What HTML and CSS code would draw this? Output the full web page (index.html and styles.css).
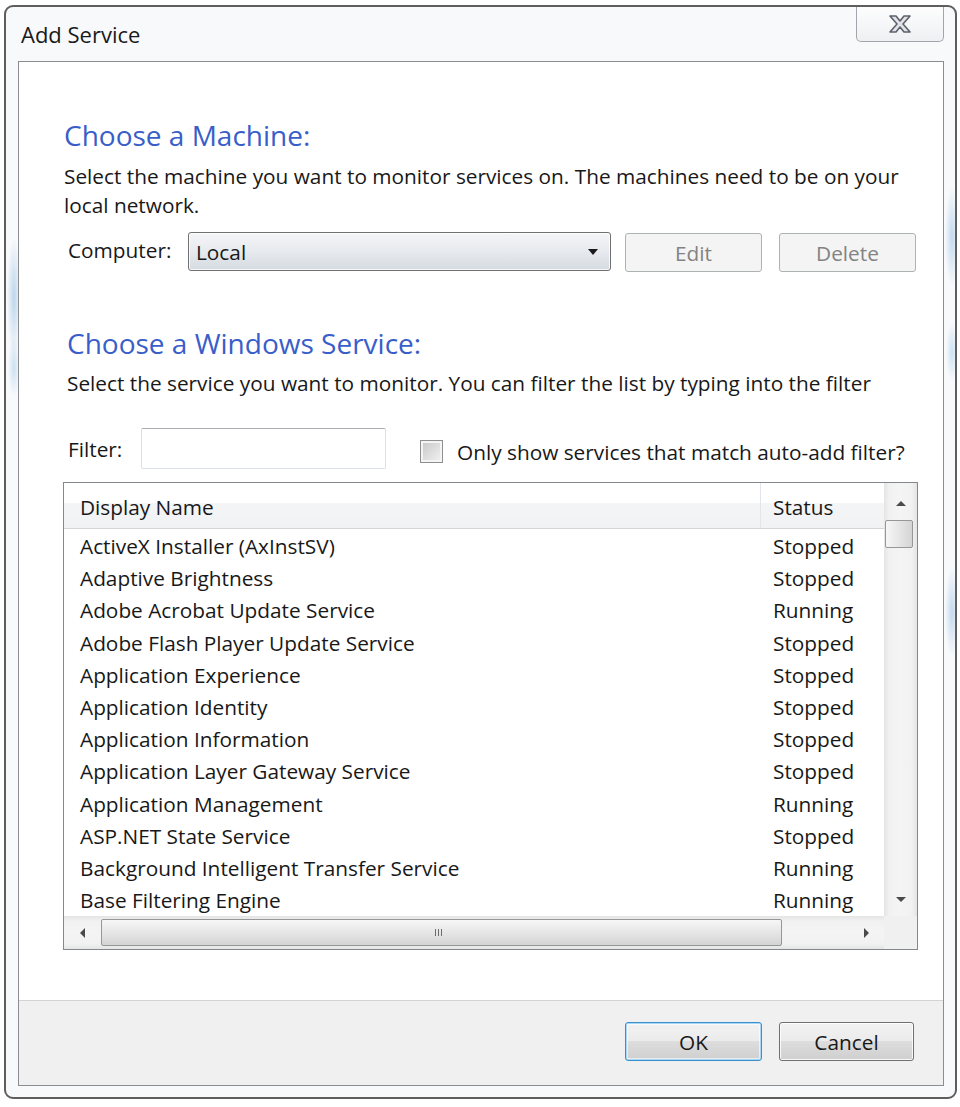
FILE: index.html
```html
<!DOCTYPE html>
<html lang="en">

<head>
  <meta charset="UTF-8">
  <meta name="viewport" content="width=device-width, initial-scale=1.0">
  <title>Add Service</title>
  <link rel="stylesheet" href="styles.css">
</head>

<body>
  <div class="window">
    <div class="titlebar">
      <span class="title">Add Service</span>
      <button class="close-btn" aria-label="Close">
        <svg width="22" height="18" viewBox="-1 -1 22 18">
          <path d="M0 0 L6 0 L10 5 L14 0 L20 0 L13 8 L20 16 L14 16 L10 11 L6 16 L0 16 L7 8 Z" fill="#e2e3e8" stroke="#5d616c" stroke-width="1.6" stroke-linejoin="round"/>
        </svg>
      </button>
    </div>

    <div class="client">
      <div class="content">
        <h2 class="section-title">Choose a Machine:</h2>
        <p class="hint">Select the machine you want to monitor services on. The machines need to be on your<br>local network.</p>

        <div class="machine-row">
          <label class="field-label">Computer:</label>
          <div class="combo">
            <span>Local</span>
            <span class="combo-arrow"></span>
          </div>
          <button class="button edit-btn" disabled>Edit</button>
          <button class="button" disabled>Delete</button>
        </div>

        <h2 class="section-title second">Choose a Windows Service:</h2>
        <p class="hint second">Select the service you want to monitor. You can filter the list by typing into the filter</p>

        <div class="filter-row">
          <label class="filter-label">Filter:</label>
          <input type="text" class="input">
          <label class="check">
            <span class="checkbox"></span>
            Only show services that match auto-add filter?
          </label>
        </div>

        <div class="listview">
          <div class="list-main">
            <div class="list-header">
              <div class="col-name">Display Name</div>
              <div class="col-status">Status</div>
            </div>
            <div class="list-body">
              <div class="row"><div class="col-name">ActiveX Installer (AxInstSV)</div><div class="col-status">Stopped</div></div>
              <div class="row"><div class="col-name">Adaptive Brightness</div><div class="col-status">Stopped</div></div>
              <div class="row"><div class="col-name">Adobe Acrobat Update Service</div><div class="col-status">Running</div></div>
              <div class="row"><div class="col-name">Adobe Flash Player Update Service</div><div class="col-status">Stopped</div></div>
              <div class="row"><div class="col-name">Application Experience</div><div class="col-status">Stopped</div></div>
              <div class="row"><div class="col-name">Application Identity</div><div class="col-status">Stopped</div></div>
              <div class="row"><div class="col-name">Application Information</div><div class="col-status">Stopped</div></div>
              <div class="row"><div class="col-name">Application Layer Gateway Service</div><div class="col-status">Stopped</div></div>
              <div class="row"><div class="col-name">Application Management</div><div class="col-status">Running</div></div>
              <div class="row"><div class="col-name">ASP.NET State Service</div><div class="col-status">Stopped</div></div>
              <div class="row"><div class="col-name">Background Intelligent Transfer Service</div><div class="col-status">Running</div></div>
              <div class="row"><div class="col-name">Base Filtering Engine</div><div class="col-status">Running</div></div>
            </div>
          </div>

          <div class="vscroll">
            <div class="sb-btn up-btn"><span class="arrow-up"></span></div>
            <div class="vthumb"></div>
            <div class="sb-track"></div>
            <div class="sb-btn"><span class="arrow-down"></span></div>
          </div>

          <div class="hscroll">
            <div class="sb-btn"><span class="arrow-left"></span></div>
            <div class="hthumb"><span class="grip"></span></div>
            <div class="sb-track"></div>
            <div class="sb-btn"><span class="arrow-right"></span></div>
          </div>

          <div class="corner"></div>
        </div>
      </div>

      <div class="footer">
        <button class="button push default">OK</button>
        <button class="button push">Cancel</button>
      </div>
    </div>
  </div>
</body>

</html>
```

FILE: styles.css
```css
body {
  margin: 0;
  padding: 5px 0 0 4px;
  background: #fff;
  font-family: "Open Sans", "Noto Sans", sans-serif;
  color: #181818;
}

/* window frame */
.window {
  width: 953px;
  height: 1094px;
  box-sizing: border-box;
  border: 2px solid #5e5e5e;
  border-radius: 9px;
  padding: 0 11px 11px 12px;
  display: flex;
  flex-direction: column;
  background:
    radial-gradient(7px 60px at 8px 290px, rgba(140, 185, 225, 0.55), transparent),
    radial-gradient(6px 30px at 8px 360px, rgba(150, 195, 230, 0.45), transparent),
    radial-gradient(7px 50px at 946px 230px, rgba(140, 185, 225, 0.5), transparent),
    radial-gradient(6px 30px at 946px 345px, rgba(150, 195, 230, 0.45), transparent),
    radial-gradient(7px 45px at 946px 605px, rgba(140, 185, 225, 0.5), transparent),
    #f8f9fb;
}

.titlebar {
  height: 54px;
  display: flex;
  justify-content: space-between;
  align-items: flex-start;
  flex-shrink: 0;
}

.title {
  margin: 13px 0 0 3px;
  font-size: 22px;
  line-height: 28px;
  color: #1a1a1a;
}

.close-btn {
  width: 88px;
  height: 35px;
  padding: 0;
  border: 1px solid #a2a6ac;
  border-top: none;
  border-radius: 0 0 5px 5px;
  background: linear-gradient(#fdfdfd, #eef0f3);
  display: flex;
  align-items: center;
  justify-content: center;
}

/* client area */
.client {
  flex: 1;
  display: flex;
  flex-direction: column;
  border: 1px solid #8b8d90;
  background: #fff;
}

.content {
  flex: 1;
  padding: 0 25px 0 44px;
}

.section-title {
  margin: 56px 0 0 1px;
  font-size: 28px;
  line-height: 34px;
  font-weight: normal;
  color: #3a5ec9;
}

.section-title.second {
  margin: 55px 0 0 4px;
}

.hint {
  margin: 10px 0 0 1px;
  font-size: 20.8px;
  line-height: 28.5px;
}

.hint.second {
  margin: 11px 0 0 4px;
  line-height: 25px;
}

.machine-row {
  margin-top: 13px;
  height: 39px;
  display: flex;
  align-items: center;
}

.field-label {
  width: 120px;
  padding-left: 5px;
  margin-top: -3px;
  font-size: 20.8px;
}

.combo {
  width: 423px;
  height: 39px;
  box-sizing: border-box;
  margin-right: 14px;
  padding: 0 12px 0 7px;
  border: 1px solid #707070;
  border-radius: 3px;
  box-shadow: inset 0 0 0 1px rgba(255, 255, 255, 0.8);
  background: linear-gradient(#f4f5f7, #e7eaee 50%, #d5dbe1);
  display: flex;
  align-items: center;
  justify-content: space-between;
  font-size: 20.8px;
}

.combo-arrow {
  width: 0;
  height: 0;
  border-left: 5px solid transparent;
  border-right: 5px solid transparent;
  border-top: 6px solid #1a1a1a;
}

.button {
  width: 137px;
  height: 39px;
  box-sizing: border-box;
  border: 1px solid #adb2b5;
  border-radius: 3px;
  background: #f4f4f4;
  color: #838383;
  font-family: inherit;
  font-size: 20.8px;
  padding: 0;
}

.machine-row .button {
  margin-top: 2px;
}

.edit-btn {
  margin-right: 17px;
}

.button.push {
  color: #181818;
  border-color: #707070;
  box-shadow: inset 0 0 0 1px rgba(255, 255, 255, 0.85);
  background: linear-gradient(#f2f2f2, #ebebeb 50%, #dddddd 50%, #cfcfcf);
}

.button.default {
  border-color: #3c8fcf;
  box-shadow: inset 0 0 0 1px #a6d8f5, inset 0 0 0 2px rgba(255, 255, 255, 0.6);
}

.footer .button:last-child {
  width: 135px;
}

/* filter */
.filter-row {
  margin-top: 32px;
  height: 41px;
  display: flex;
  align-items: center;
  font-size: 20.8px;
}

.filter-label {
  width: 73px;
  padding-left: 5px;
}

.input {
  width: 245px;
  height: 41px;
  box-sizing: border-box;
  border: 1px solid #dbdfe6;
  border-top-color: #abadb3;
  border-radius: 2px;
  margin-right: 34px;
}

.check {
  display: flex;
  align-items: center;
  margin-top: 6px;
}

.checkbox {
  width: 23px;
  height: 23px;
  box-sizing: border-box;
  margin-right: 14px;
  border: 1px solid #8f8f8f;
  box-shadow: inset 0 0 0 2px #f4f4f4;
  background: linear-gradient(135deg, #c6c6c6, #f3f3f3);
}

/* list view */
.listview {
  margin-top: 13px;
  height: 468px;
  box-sizing: border-box;
  border: 1px solid #828790;
  display: grid;
  grid-template-columns: 1fr 33px;
  grid-template-rows: 1fr 33px;
  font-size: 20.8px;
}

.list-main {
  overflow: hidden;
}

.list-header {
  height: 46px;
  box-sizing: border-box;
  padding-top: 3px;
  display: flex;
  line-height: 42px;
  border-bottom: 1px solid #d5d5d5;
  background: linear-gradient(#fff 0, #fff 44%, #f4f5f7 44%, #f1f2f4);
}

.list-header .col-name {
  border-right: 1px solid #e2e5ea;
  margin-top: -3px;
  padding-top: 3px;
}

.col-name {
  width: 697px;
  box-sizing: border-box;
  padding-left: 16px;
  white-space: nowrap;
}

.col-status {
  padding-left: 12px;
  white-space: nowrap;
}

.list-body {
  padding-top: 1px;
}

.row {
  display: flex;
  height: 32.2px;
  line-height: 32.2px;
}

/* scrollbars */
.vscroll {
  display: flex;
  flex-direction: column;
  background: linear-gradient(90deg, #e4e4e4, #f1f1f1 15%, #f4f4f4 50%, #f1f1f1 85%, #e4e4e4);
}

.hscroll {
  display: flex;
  background: linear-gradient(#e4e4e4, #f1f1f1 15%, #f4f4f4 50%, #f1f1f1 85%, #e4e4e4);
}

.sb-btn {
  flex: 0 0 33px;
  display: flex;
  align-items: center;
  justify-content: center;
}

.up-btn {
  flex-basis: 36px;
  padding-top: 4px;
  box-sizing: border-box;
}

.hscroll .sb-btn {
  flex-basis: 36px;
}

.sb-track {
  flex: 1;
}

.vthumb {
  height: 28px;
  margin: 1px 4px 0 1px;
  box-sizing: border-box;
  border: 1px solid #979797;
  border-radius: 2px;
  background: linear-gradient(90deg, #f6f6f6, #e6e6e6 50%, #d4d4d4);
}

.hthumb {
  width: 681px;
  height: 27px;
  margin: 3px 0 0 1px;
  box-sizing: border-box;
  border: 1px solid #979797;
  border-radius: 2px;
  background: linear-gradient(#f6f6f6, #e6e6e6 50%, #d4d4d4);
  display: flex;
  align-items: center;
  justify-content: center;
}

.grip {
  width: 7px;
  height: 7px;
  margin-left: -6px;
  background: repeating-linear-gradient(90deg, #6d6d6d 0 1px, transparent 1px 3px);
}

.arrow-up,
.arrow-down,
.arrow-left,
.arrow-right {
  width: 0;
  height: 0;
}

.arrow-up {
  border-left: 5px solid transparent;
  border-right: 5px solid transparent;
  border-bottom: 5px solid #4a4a4a;
}

.arrow-down {
  border-left: 5px solid transparent;
  border-right: 5px solid transparent;
  border-top: 5px solid #4a4a4a;
}

.arrow-left {
  border-top: 5px solid transparent;
  border-bottom: 5px solid transparent;
  border-right: 5px solid #4a4a4a;
}

.arrow-right {
  border-top: 5px solid transparent;
  border-bottom: 5px solid transparent;
  border-left: 5px solid #4a4a4a;
}

.corner {
  background: #f0f0f0;
}

/* footer */
.footer {
  height: 85px;
  flex-shrink: 0;
  box-sizing: border-box;
  border-top: 1px solid #d3d3d3;
  background: #f0f0f0;
  display: flex;
  justify-content: flex-end;
  align-items: flex-start;
  gap: 17px;
  padding: 21px 29px 0 0;
}
```
